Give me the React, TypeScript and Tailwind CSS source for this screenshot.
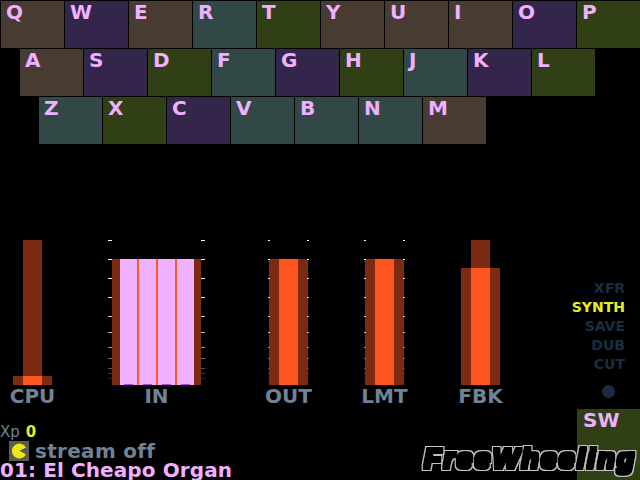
const BROWN = "bg-[#483b32]";
const PURPLE = "bg-[#33264a]";
const TEAL = "bg-[#324846]";
const OLIVE = "bg-[#313f14]";

const rows: { pad: string; keys: [string, string][] }[] = [
  {
    pad: "pl-[1px]",
    keys: [
      ["Q", BROWN], ["W", PURPLE], ["E", BROWN], ["R", TEAL], ["T", OLIVE],
      ["Y", BROWN], ["U", BROWN], ["I", BROWN], ["O", PURPLE], ["P", OLIVE],
    ],
  },
  {
    pad: "pl-[20px]",
    keys: [
      ["A", BROWN], ["S", PURPLE], ["D", OLIVE], ["F", TEAL], ["G", PURPLE],
      ["H", OLIVE], ["J", TEAL], ["K", PURPLE], ["L", OLIVE],
    ],
  },
  {
    pad: "pl-[39px]",
    keys: [
      ["Z", TEAL], ["X", OLIVE], ["C", PURPLE], ["V", TEAL], ["B", TEAL],
      ["N", TEAL], ["M", BROWN],
    ],
  },
];

const TICKS = [0, 19, 38, 57, 76, 92, 107, 118, 128, 133, 138];
const SHADES = [255, 255, 230, 215, 200, 185, 150, 110, 85, 60, 35];

function Ticks({ len, offset }: { len: number; offset: number }) {
  return (
    <>
      {TICKS.map((y, i) => {
        const s = SHADES[i];
        const color = `rgb(${s},${s},${s})`;
        return (
          <div key={y}>
            <div
              className="absolute h-px"
              style={{ top: y, left: -offset, width: len, background: color }}
            />
            <div
              className="absolute h-px"
              style={{ top: y, right: -offset, width: len, background: color }}
            />
          </div>
        );
      })}
    </>
  );
}

function Label({ children }: { children: string }) {
  return (
    <div className="flex justify-center h-[22px] text-[20px] leading-[22px] font-bold text-[#6f8296] whitespace-nowrap">
      {children}
    </div>
  );
}

function Full39() {
  return (
    <div className="relative h-[145px] w-[39px] flex flex-col justify-end">
      <Ticks len={2} offset={1} />
      <div className="h-[126px] flex bg-[#7d2a12] justify-center">
        <div className="w-[19px] bg-[#ff5722]" />
      </div>
    </div>
  );
}

function Pink() {
  return (
    <div className="w-[17px] bg-[#eeb0ff] flex items-end justify-center">
      <div className="w-[9px] h-px bg-[#b040e0]" />
    </div>
  );
}

function Orange() {
  return <div className="w-[2px] bg-[#ff5722]" />;
}

export default function App() {
  return (
    <div
      className="relative w-[640px] h-[480px] bg-black overflow-hidden flex flex-col"
      style={{ fontFamily: '"DejaVu Sans", sans-serif' }}
    >
      {/* keyboard */}
      <div className="pt-[1px] flex flex-col gap-[1px] h-[240px]">
        {rows.map((r) => (
          <div key={r.pad} className={`flex gap-[1px] ${r.pad}`}>
            {r.keys.map(([k, c]) => (
              <div
                key={k}
                className={`w-[63px] h-[47px] ${c} pl-[5px] text-[20px] leading-[23px] font-bold text-[#eeb0ff]`}
              >
                {k}
              </div>
            ))}
          </div>
        ))}
      </div>

      {/* meters */}
      <div className="flex h-[168px] pl-[13px]">
        <div className="w-[39px]">
          <div className="h-[145px] flex flex-col items-center">
            <div className="w-[19px] h-[136px] bg-[#7d2a12]" />
            <div className="w-[39px] h-[9px] bg-[#7d2a12] flex justify-center">
              <div className="w-[19px] bg-[#ff5722]" />
            </div>
          </div>
          <Label>CPU</Label>
        </div>

        <div className="w-[89px] ml-[60px]">
          <div className="relative h-[145px] flex flex-col justify-end">
            <Ticks len={4} offset={4} />
            <div className="h-[126px] flex">
              <div className="w-[8px] bg-[#7d2a12]" />
              <Pink />
              <Orange />
              <Pink />
              <Orange />
              <Pink />
              <Orange />
              <Pink />
              <div className="w-[7px] bg-[#7d2a12]" />
            </div>
          </div>
          <Label>IN</Label>
        </div>

        <div className="w-[39px] ml-[68px]">
          <Full39 />
          <Label>OUT</Label>
        </div>

        <div className="w-[39px] ml-[57px]">
          <Full39 />
          <Label>LMT</Label>
        </div>

        <div className="w-[39px] ml-[57px]">
          <div className="h-[145px] flex flex-col items-center">
            <div className="w-[19px] h-[28px] bg-[#7d2a12]" />
            <div className="w-[39px] h-[117px] bg-[#7d2a12] flex justify-center">
              <div className="w-[19px] bg-[#ff5722]" />
            </div>
          </div>
          <Label>FBK</Label>
        </div>

        {/* loop mode menu */}
        <div className="ml-auto mr-[15px] pt-[39px] flex flex-col items-end text-[14px] leading-[19px] font-bold text-[#1c2c40]">
          <div>XFR</div>
          <div className="text-[#e6f01e]">SYNTH</div>
          <div>SAVE</div>
          <div>DUB</div>
          <div>CUT</div>
          <div className="mt-[11px] mr-[10px] w-[13px] h-[13px] rounded-full bg-[#1c2c40]" />
        </div>
      </div>

      {/* bottom */}
      <div className="flex-1 flex justify-between">
        <div className="pt-[16px] whitespace-nowrap">
          <div className="h-[17px] text-[15px] leading-[17px] text-[#6f8296] flex gap-[6px]">
            <span>Xp</span>
            <span className="font-bold text-[#e6f01e]">0</span>
          </div>
          <div className="flex items-center h-[20px] pl-[9px] gap-[6px]">
            <div className="w-[20px] h-[20px] bg-[#5b5b50] flex items-center justify-center">
              <svg width="16" height="16" viewBox="0 0 16 16">
                <path d="M8 8 L15 4.5 A7.5 7.5 0 1 0 15 11.5 L9 8 Z" fill="#f0e614" />
              </svg>
            </div>
            <span className="text-[20px] leading-[20px] font-bold tracking-[0.3px] text-[#6f8296]">stream off</span>
          </div>
          <div className="text-[20px] leading-[19px] font-bold tracking-[0.1px] text-[#eeb0ff]">01: El Cheapo Organ</div>
        </div>
        <div className={`w-[63px] h-[71px] mt-[1px] ${OLIVE} pl-[6px] text-[20px] leading-[23px] font-bold text-[#eeb0ff]`}>
          SW
        </div>
      </div>

      {/* logo lies over the SW key */}
      <svg width="0" height="0" className="absolute">
        <filter id="logo-outline" x="-5%" y="-20%" width="110%" height="140%">
          <feMorphology in="SourceAlpha" operator="dilate" radius="3" result="outer" />
          <feFlood floodColor="#c4c4c4" />
          <feComposite in2="outer" operator="in" result="line" />
          <feMorphology in="SourceAlpha" operator="dilate" radius="2" result="fat" />
          <feMerge>
            <feMergeNode in="line" />
            <feMergeNode in="fat" />
          </feMerge>
        </filter>
      </svg>
      <div
        className="absolute left-[424px] top-[442px] text-[28px] leading-[34px] font-bold italic text-black whitespace-nowrap tracking-[2.4px] [filter:url(#logo-outline)]"
        style={{ fontFamily: '"Liberation Sans", sans-serif' }}
      >
        FreeWheeling
      </div>
    </div>
  );
}
